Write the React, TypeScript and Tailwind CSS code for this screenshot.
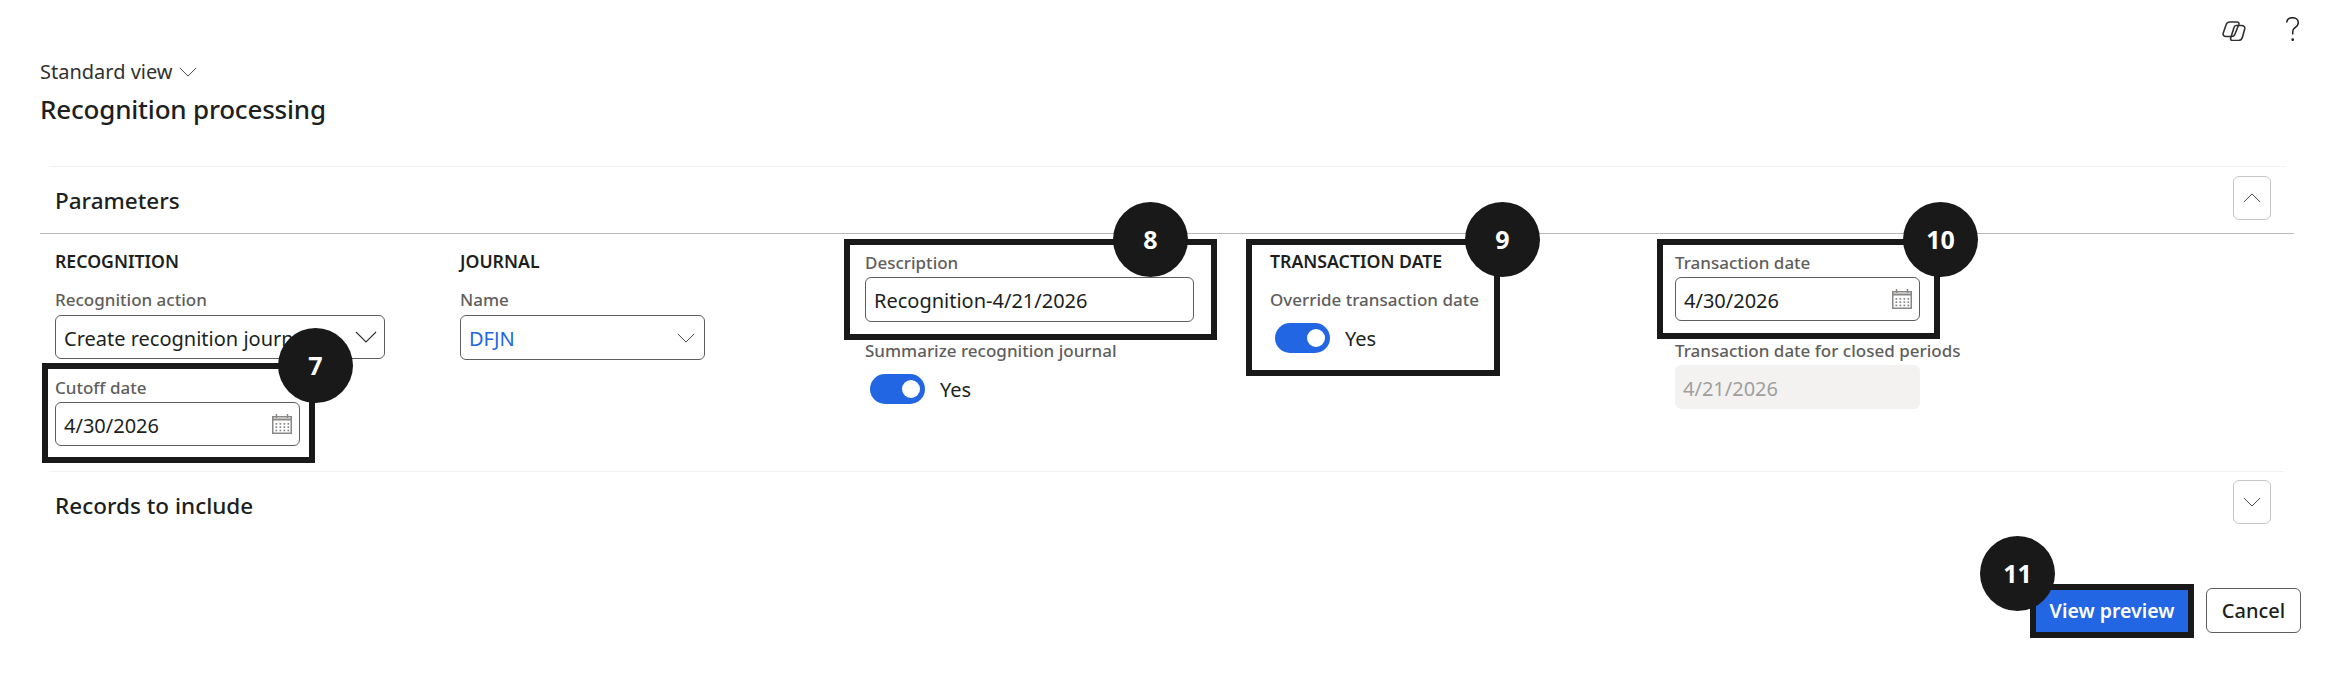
import type { ReactNode } from 'react';

const FONT = "font-['Noto_Sans',sans-serif]";

function Chevron({ up = false, className = '' }: { up?: boolean; className?: string }) {
  return (
    <svg width="22" height="12" viewBox="0 0 22 12" fill="none" className={className}>
      <path d={up ? 'M1 11 11 1l10 10' : 'M1 1l10 10L21 1'} stroke="#323130" strokeWidth="1.1" />
    </svg>
  );
}

function CalendarIcon() {
  const dots = [];
  for (let r = 0; r < 3; r++) {
    for (let c = 0; c < 4; c++) {
      dots.push(<rect key={`${r}-${c}`} x={3.5 + c * 4} y={9 + r * 3.3} width="1.7" height="1.7" fill="#8a8886" />);
    }
  }
  return (
    <svg width="20" height="20" viewBox="0 0 20 20" fill="none">
      <rect x="0.75" y="2.75" width="18.5" height="16.5" stroke="#8a8886" strokeWidth="1.5" />
      <path d="M1 5.500h18" stroke="#8a8886" strokeWidth="2" />
      <path d="M4.500 0v4M15.500 0v4" stroke="#8a8886" strokeWidth="1.5" />
      {dots}
    </svg>
  );
}

function CopilotIcon() {
  return (
    <svg width="24" height="20" viewBox="0 0 24 20" fill="none" stroke="#323130" strokeWidth="1.6">
      <path d="M8 1h7c1.500 0 2.300 1 1.800 2.500L13 13c-.6 1.600-1.600 2.500-3.200 2.500H4c-2.200 0-3.300-1.400-2.800-3.300L4 4C4.600 2 6 1 8 1Z" />
      <path d="M14 4.500h5.500c2.400 0 3.700 1.400 3.200 3.500L20.500 16c-.6 2.200-2 3.500-4 3.500h-6c-1.500 0-2.300-1-1.800-2.500L12 6.500c.3-1.200 1-2 2-2Z" />
    </svg>
  );
}

function Label({ children, className = '' }: { children: ReactNode; className?: string }) {
  return <div className={`h-6 text-[17px] leading-6 font-medium text-[#605e5c] whitespace-nowrap ${className}`}>{children}</div>;
}

function Heading({ children }: { children: ReactNode }) {
  return <div className="h-6 text-[17.7px] leading-6 font-semibold text-[#201f1e] whitespace-nowrap">{children}</div>;
}

function Box({ children, icon, className = '' }: { children: ReactNode; icon?: ReactNode; className?: string }) {
  return (
    <div className={`flex items-center justify-between bg-white border border-[#605e5c] rounded-[6px] pl-2 pr-[7px] text-[20px] whitespace-nowrap overflow-hidden ${className}`}>
      <span className="pt-[3px]">{children}</span>
      {icon}
    </div>
  );
}

function Toggle({ className = '' }: { className?: string }) {
  return (
    <div className={`flex items-center ${className}`}>
      <div className="w-[55px] h-[30px] rounded-full bg-[#2266e3] flex items-center justify-end pr-[5px]">
        <div className="w-[18px] h-[18px] rounded-full bg-white" />
      </div>
      <span className="ml-[15px] pt-[3px] text-[20px] text-[#201f1e]">Yes</span>
    </div>
  );
}

function Badge({ n, className }: { n: number; className: string }) {
  return (
    <div className={`absolute w-[75px] h-[75px] rounded-full bg-[#191919] flex items-center justify-center text-white text-[25px] font-bold z-20 ${className}`}>
      {n}
    </div>
  );
}

function Highlight({ className }: { className: string }) {
  return <div className={`absolute border-[6px] border-[#191919] z-10 pointer-events-none ${className}`} />;
}

function SectionButton({ up = false }: { up?: boolean }) {
  return (
    <div className="w-[38px] h-[44px] border border-[#c8c6c4] rounded-[6px] flex items-center justify-center">
      <Chevron up={up} className="w-[18px] h-[10px]" />
    </div>
  );
}

export default function App() {
  return (
    <div className={`w-[2330px] h-[676px] bg-white overflow-hidden ${FONT}`}>
      <div className="h-[60px] flex justify-end items-start pt-[17px] pr-[31px] gap-[40px]">
        <div className="mt-[4px]"><CopilotIcon /></div>
        <svg width="13" height="24" viewBox="0 0 13 24" fill="none" stroke="#201f1e" strokeWidth="1.5">
          <path d="M.7 5.500C1 2.500 3.500.7 6.500.7c3.300 0 5.800 2 5.800 5 0 2.600-1.600 3.700-3.300 5-1.500 1.100-2.300 2.200-2.300 4v2.800" />
          <circle cx="6.700" cy="22.700" r=".6" />
        </svg>
      </div>

      <div className="pl-[40px]">
        <div className="h-6 flex items-center text-[20px] leading-6 text-[#323130]">
          Standard view
          <Chevron className="ml-[6px] w-[18px] h-[10px]" />
        </div>
        <h1 className="mt-[7px] h-9 text-[26px] leading-9 tracking-[-0.2px] font-medium text-[#201f1e]">Recognition processing</h1>
      </div>

      <div className="mt-[39px] ml-[49px] mr-[44px] border-t border-[#f3f2f1]" />

      <div className="ml-[40px] mr-[36px] h-[67px] border-b border-[#b8b8b8] flex justify-between items-start pl-[15px] pr-[23px]">
        <div className="mt-[20px] h-7 text-[22.5px] leading-7 font-medium text-[#201f1e]">Parameters</div>
        <div className="mt-[9px]"><SectionButton up /></div>
      </div>

      <div className="h-[237px] pl-[55px] grid grid-cols-[405px_405px_405px_405px_auto]">
        <div className="pt-[15px] relative">
          <Heading>RECOGNITION</Heading>
          <Label className="mt-[15px]">Recognition action</Label>
          <Box className="mt-[3px] w-[330px] h-[44px] text-[#201f1e]" icon={<Chevron className="shrink-0" />}>
            Create recognition journal
          </Box>
          <Label className="mt-[17px]">Cutoff date</Label>
          <Box className="mt-[2px] w-[245px] h-[44px] text-[#201f1e]" icon={<CalendarIcon />}>
            4/30/2026
          </Box>
          <Highlight className="left-[-13px] top-[129px] w-[273px] h-[100px]" />
          <Badge n={7} className="left-[223px] top-[94px]" />
        </div>

        <div className="pt-[15px]">
          <Heading>JOURNAL</Heading>
          <Label className="mt-[15px]">Name</Label>
          <Box className="mt-[3px] w-[245px] h-[45px] text-[#2266e3]" icon={<Chevron className="shrink-0 w-[18px] h-[10px] mr-[2px]" />}>
            DFJN
          </Box>
        </div>

        <div className="pt-[17px] relative">
          <Label>Description</Label>
          <Box className="mt-[2px] w-[329px] h-[45px] text-[#201f1e]">Recognition-4/21/2026</Box>
          <Label className="mt-[17px]">Summarize recognition journal</Label>
          <Toggle className="mt-[9px] ml-[5px]" />
          <Highlight className="left-[-21px] top-[5px] w-[373px] h-[101px]" />
          <Badge n={8} className="left-[248px] top-[-32px]" />
        </div>

        <div className="pt-[15px] relative">
          <Heading>TRANSACTION DATE</Heading>
          <Label className="mt-[15px]">Override transaction date</Label>
          <Toggle className="mt-[9px] ml-[5px]" />
          <Highlight className="left-[-24px] top-[5px] w-[254px] h-[137px]" />
          <Badge n={9} className="left-[195px] top-[-32px]" />
        </div>

        <div className="pt-[17px] relative">
          <Label>Transaction date</Label>
          <Box className="mt-[2px] w-[245px] h-[44px] text-[#201f1e]" icon={<CalendarIcon />}>
            4/30/2026
          </Box>
          <Label className="mt-[18px]">Transaction date for closed periods</Label>
          <div className="mt-[2px] w-[245px] h-[44px] rounded-[6px] bg-[#f3f2f1] pl-2 pt-[3px] flex items-center text-[20px] text-[#a19f9d]">4/21/2026</div>
          <Highlight className="left-[-18px] top-[5px] w-[283px] h-[100px]" />
          <Badge n={10} className="left-[228px] top-[-32px]" />
        </div>
      </div>

      <div className="ml-[49px] mr-[46px] border-t border-[#f3f2f1]" />

      <div className="h-[116px] pl-[55px] pr-[59px] flex justify-between items-start">
        <div className="mt-[20px] h-7 text-[22.5px] leading-7 font-medium text-[#201f1e]">Records to include</div>
        <div className="mt-[8px]"><SectionButton /></div>
      </div>

      <div className="flex justify-end items-start pr-[29px] gap-[18px]">
        <div className="relative mt-[2px]">
          <button className="w-[152px] h-[42px] bg-[#2266e3] text-white text-[19.5px] font-semibold whitespace-nowrap">View preview</button>
          <Highlight className="left-[-6px] top-[-6px] w-[164px] h-[54px]" />
          <Badge n={11} className="left-[-56px] top-[-54px]" />
        </div>
        <button className="w-[95px] h-[45px] bg-white border border-[#605e5c] rounded-[6px] text-[20px] font-medium text-[#201f1e]">Cancel</button>
      </div>
    </div>
  );
}
